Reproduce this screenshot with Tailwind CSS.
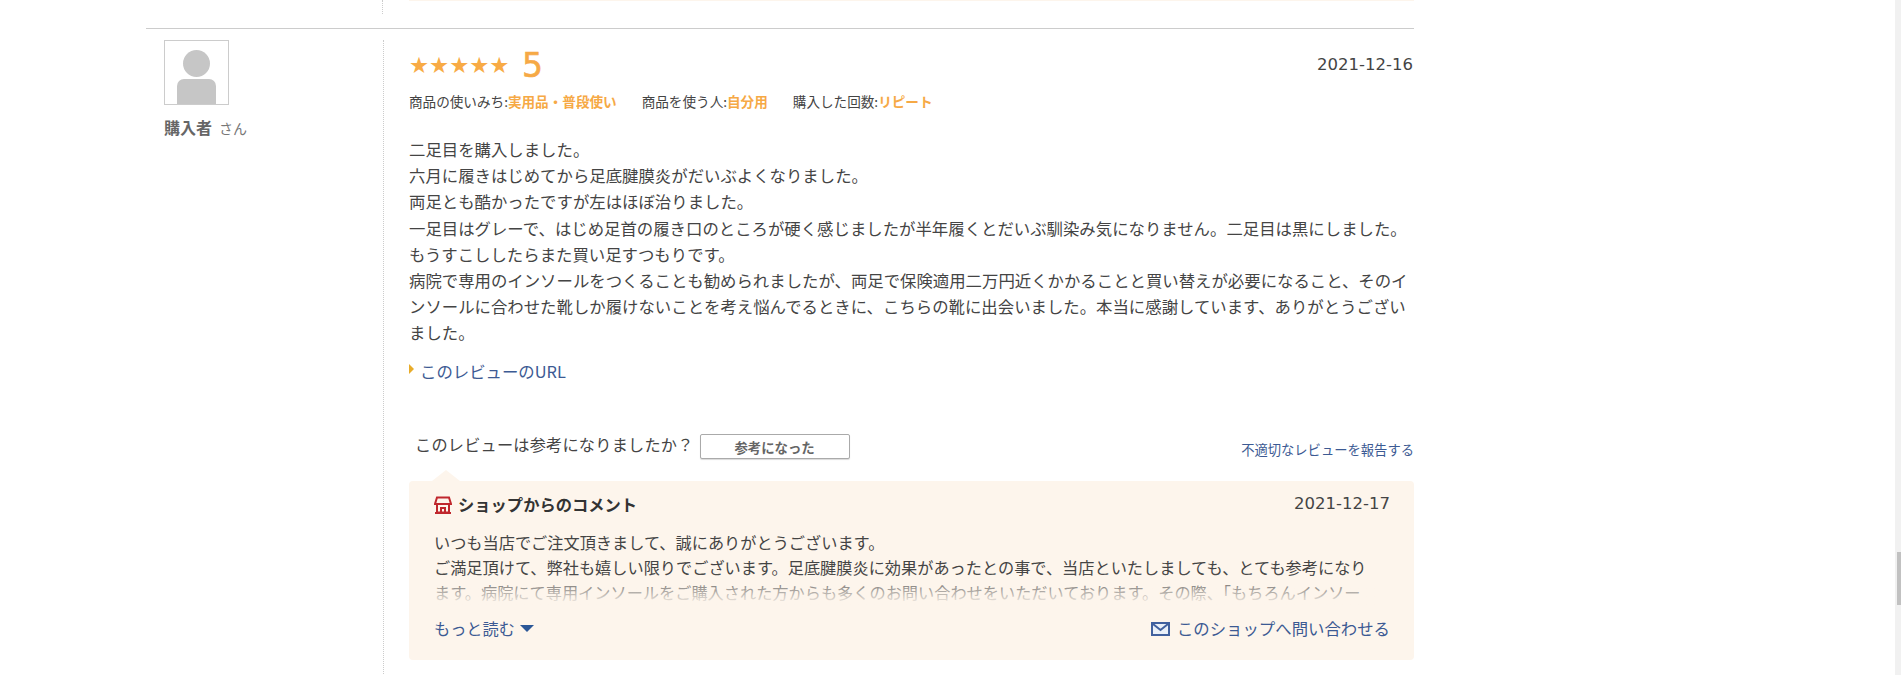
<!DOCTYPE html>
<html lang="ja"><head><meta charset="utf-8"><script src="https://cdn.jsdelivr.net/npm/@tailwindcss/browser@4"></script></head>
<body class="bg-white">
<div class="relative h-[675px] w-[1901px] overflow-hidden bg-white font-['Noto_Sans_CJK_JP','Noto_Sans',sans-serif] text-[#333] text-[14px]">
  <div class="ml-[146px] w-[1268px]">
    <div class="flex h-[14px]">
      <div class="w-[237px] border-r border-dotted border-[#ccc] h-[14px]"></div>
      <div class="ml-[26px] w-[1005px] h-[1px] bg-[#fdf5ec]"></div>
    </div>
    <div class="mt-[14px] h-px bg-[#ccc]"></div>
    <div class="flex mt-[11px]">
      <div class="w-[238px] h-[640px] border-r border-dotted border-[#ccc] pl-[18px] shrink-0">
        <div class="w-[65px] h-[65px] border border-[#ccc] flex flex-col items-center bg-white">
          <div class="mt-[9px] w-[27px] h-[27px] rounded-full bg-[#c6c6c6]"></div>
          <div class="mt-[2px] w-[39px] h-[25px] rounded-t-[7px] bg-[#c6c6c6]"></div>
        </div>
        <div class="mt-[11px] text-[#666] leading-[22px] flex items-baseline"><span class="font-bold text-[16px]">購入者</span><span class="ml-[7px] text-[14px] text-[#777]">さん</span></div>
      </div>
      <div class="ml-[25px] w-[1005px]">
        <div class="mt-[8px] flex items-center justify-between h-[34px] pr-px">
          <div class="flex items-center">
            <span class="text-[#f8ab45] text-[22.4px] leading-none font-['DejaVu_Sans'] w-[100px] whitespace-nowrap">★★★★★</span>
            <span class="ml-[13px] text-[#f6a945] text-[33px] font-medium leading-none font-['DejaVu_Sans'] [-webkit-text-stroke:0.6px_#f6a945]">5</span>
          </div>
          <span class="text-[#444] text-[16.5px] font-['DejaVu_Sans']">2021-12-16</span>
        </div>
        <div class="mt-[10px] flex text-[13.6px] leading-[18px] text-[#444]">
          <span>商品の使いみち:<b class="text-[#f6a945] font-bold">実用品・普段使い</b></span>
          <span class="ml-[25px]">商品を使う人:<b class="text-[#f6a945] font-bold">自分用</b></span>
          <span class="ml-[25px]">購入した回数:<b class="text-[#f6a945] font-bold">リピート</b></span>
        </div>
        <p class="mt-[26px] w-[1005px] text-[16.4px] leading-[26.2px] text-[#444]">二足目を購入しました。<br>六月に履きはじめてから足底腱膜炎がだいぶよくなりました。<br>両足とも酷かったですが左はほぼ治りました。<br>一足目はグレーで、はじめ足首の履き口のところが硬く感じましたが半年履くとだいぶ馴染み気になりません。二足目は黒にしました。<br>もうすこししたらまた買い足すつもりです。<br>病院で専用のインソールをつくることも勧められましたが、両足で保険適用二万円近くかかることと買い替えが必要になること、そのインソールに合わせた靴しか履けないことを考え悩んでるときに、こちらの靴に出会いました。本当に感謝しています、ありがとうございました。</p>
        <div class="mt-[14px] flex items-center h-[24px]">
          <span class="w-0 h-0 border-y-[5px] border-y-transparent border-l-[5px] border-l-[#e8ac2a] -mt-[5px]"></span>
          <a class="ml-[6px] text-[#3c5a93] text-[16.4px]">このレビューのURL</a>
        </div>
        <div class="mt-[48px] flex items-center justify-between h-[26px]">
          <div class="flex items-center pl-[6px]">
            <span class="text-[16.2px] text-[#444] tracking-[0.2px]">このレビューは参考になりましたか？</span>
            <button class="ml-[6px] w-[150px] h-[25px] translate-y-[2px] border border-[#aaa] rounded-[2px] bg-white text-[13.4px] font-bold text-[#666] shadow-[0_1px_1px_rgba(0,0,0,0.15)]">参考になった</button>
          </div>
          <a class="text-[13.3px] text-[#3c5a93] translate-y-[5px]">不適切なレビューを報告する</a>
        </div>
        <div class="relative mt-[23px] h-[179px] rounded-[4px] bg-[#fdf5ec] pl-[25px] pr-[38px] pt-[12px]">
          <span class="absolute left-[23px] -top-[11px] w-0 h-0 border-x-[14px] border-x-transparent border-b-[11px] border-b-[#fdf5ec]"></span>
          <div class="flex items-center justify-between h-[24px] -mr-[14px]">
            <div class="flex items-center">
              <svg width="18" height="18" viewBox="0 0 18 18" fill="none" stroke="#c0272d" stroke-width="2"><path d="M3 1.5h12l2 6.5H1z"/><path d="M3 8v8.5h12V8"/><path d="M7 16.5v-4.5h4v4.5"/><path d="M1 17h16"/></svg>
              <span class="ml-[6px] text-[16.3px] font-bold text-[#333]">ショップからのコメント</span>
            </div>
            <span class="text-[#444] text-[16.5px] font-['DejaVu_Sans']">2021-12-17</span>
          </div>
          <div class="relative mt-[13px] h-[75px] overflow-hidden text-[16.2px] leading-[25px] text-[#444]">
            いつも当店でご注文頂きまして、誠にありがとうございます。<br>ご満足頂けて、弊社も嬉しい限りでございます。足底腱膜炎に効果があったとの事で、当店といたしましても、とても参考になります。病院にて専用インソールをご購入された方からも多くのお問い合わせをいただいております。その際、「もちろんインソー
            <div class="absolute inset-x-0 bottom-0 h-[32px] bg-gradient-to-b from-[#fdf5ec]/0 to-[#fdf5ec]"></div>
          </div>
          <div class="mt-[9px] flex items-center justify-between h-[30px] -mr-[14px]">
            <a class="flex items-center text-[#3c5a93] text-[16.2px]">もっと読む<span class="ml-[5px] w-0 h-0 border-x-[7px] border-x-transparent border-t-[7px] border-t-[#2b5797]"></span></a>
            <a class="flex items-center text-[#3c5a93] text-[16.4px]">
              <svg width="19" height="14" viewBox="0 0 19 14" fill="#eaf0f8" stroke="#41619e" stroke-width="2"><rect x="1" y="1" width="17" height="12"/><path d="M2 2l7.5 6L17 2"/></svg>
              <span class="ml-[7px]">このショップへ問い合わせる</span>
            </a>
          </div>
        </div>
      </div>
    </div>
  </div>
  <div class="absolute right-0 top-0 bottom-0 w-[6px] bg-[#f1f1f1]">
    <div class="absolute left-[2px] right-0 top-[552px] h-[53px] bg-[#c1c1c1]"></div>
  </div>
</div>
</body></html>
